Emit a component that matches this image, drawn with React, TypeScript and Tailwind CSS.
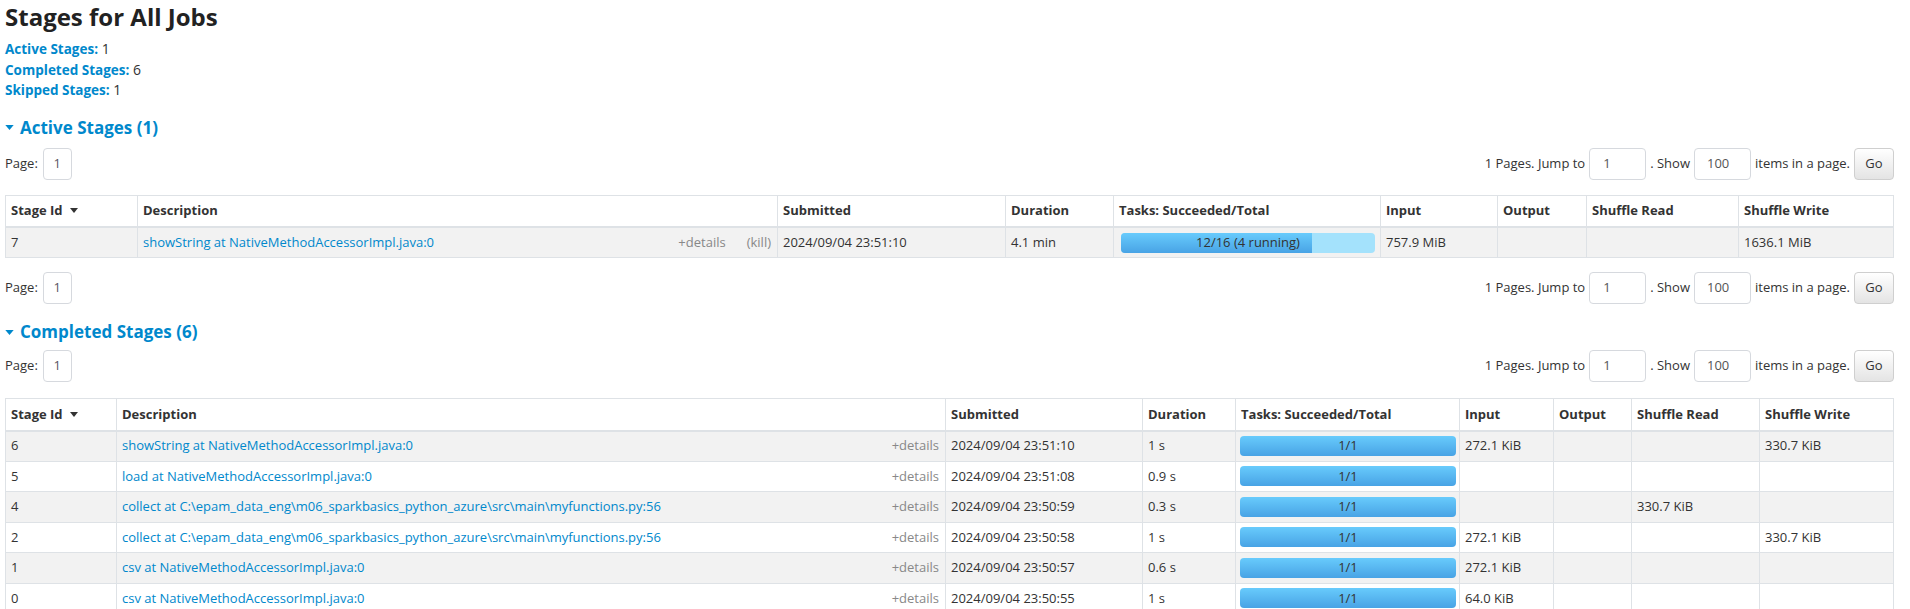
type Stage = {
  id: string;
  desc: string;
  submitted: string;
  duration: string;
  done: number;
  total: number;
  running?: number;
  input?: string;
  output?: string;
  shuffleRead?: string;
  shuffleWrite?: string;
  kill?: boolean;
};

const collectDesc = 'collect at C:\\epam_data_eng\\m06_sparkbasics_python_azure\\src\\main\\myfunctions.py:56';

const activeStages: Stage[] = [
  { id: '7', desc: 'showString at NativeMethodAccessorImpl.java:0', submitted: '2024/09/04 23:51:10', duration: '4.1 min', done: 12, total: 16, running: 4, input: '757.9 MiB', shuffleWrite: '1636.1 MiB', kill: true },
];

const completedStages: Stage[] = [
  { id: '6', desc: 'showString at NativeMethodAccessorImpl.java:0', submitted: '2024/09/04 23:51:10', duration: '1 s', done: 1, total: 1, input: '272.1 KiB', shuffleWrite: '330.7 KiB' },
  { id: '5', desc: 'load at NativeMethodAccessorImpl.java:0', submitted: '2024/09/04 23:51:08', duration: '0.9 s', done: 1, total: 1 },
  { id: '4', desc: collectDesc, submitted: '2024/09/04 23:50:59', duration: '0.3 s', done: 1, total: 1, shuffleRead: '330.7 KiB' },
  { id: '2', desc: collectDesc, submitted: '2024/09/04 23:50:58', duration: '1 s', done: 1, total: 1, input: '272.1 KiB', shuffleWrite: '330.7 KiB' },
  { id: '1', desc: 'csv at NativeMethodAccessorImpl.java:0', submitted: '2024/09/04 23:50:57', duration: '0.6 s', done: 1, total: 1, input: '272.1 KiB' },
  { id: '0', desc: 'csv at NativeMethodAccessorImpl.java:0', submitted: '2024/09/04 23:50:55', duration: '1 s', done: 1, total: 1, input: '64.0 KiB' },
];

const headers = ['Stage Id', 'Description', 'Submitted', 'Duration', 'Tasks: Succeeded/Total', 'Input', 'Output', 'Shuffle Read', 'Shuffle Write'];

const activeCols = ['w-[132px]', 'w-[640px]', 'w-[228px]', 'w-[108px]', 'w-[267px]', 'w-[117px]', 'w-[89px]', 'w-[152px]', ''];
const completedCols = ['w-[111px]', 'w-[829px]', 'w-[197px]', 'w-[93px]', 'w-[224px]', 'w-[94px]', 'w-[78px]', 'w-[128px]', ''];

function Caret({ className }: { className: string }) {
  return (
    <svg viewBox="0 0 10 6" className={className}>
      <polygon points="0,0 10,0 5,6" fill="currentColor" />
    </svg>
  );
}

function Progress({ done, total, running }: { done: number; total: number; running?: number }) {
  const pct = (done / total) * 100;
  const label = running ? `${done}/${total} (${running} running)` : `${done}/${total}`;
  return (
    <div className="relative h-[20px] w-full overflow-hidden rounded-[4px] bg-[#a4e2fc]">
      <div className="h-full bg-gradient-to-b from-[#68cbfc] to-[#48a3e5]" style={{ width: `${pct}%` }} />
      <span className="absolute inset-0 flex items-center justify-center text-[#333]">{label}</span>
    </div>
  );
}

function Pager() {
  return (
    <div className="flex h-[32px] items-center justify-between">
      <div className="flex items-center gap-[5px]">
        <span>Page:</span>
        <span className="flex h-[32px] w-[29px] items-center justify-center rounded-[4px] border border-[#d6d9de] text-[#5a5564]">1</span>
      </div>
      <div className="flex items-center gap-[4px]">
        <span>1 Pages. Jump to</span>
        <span className="flex h-[32px] w-[57px] items-center rounded-[4px] border border-[#d6d9de] pl-[13px] text-[#555]">1</span>
        <span>. Show</span>
        <span className="flex h-[32px] w-[57px] items-center rounded-[4px] border border-[#d6d9de] pl-[12px] text-[#555]">100</span>
        <span>items in a page.</span>
        <button className="h-[32px] w-[40px] rounded-[4px] border border-[#cfcfcf] bg-gradient-to-b from-white to-[#e4e4e4] text-[#333]">Go</button>
      </div>
    </div>
  );
}

function StageTable({ rows, cols, barPad }: { rows: Stage[]; cols: string[]; barPad: string }) {
  return (
    <table className="w-full table-fixed border-collapse border border-[#dee2e6]">
      <colgroup>
        {cols.map((c, i) => (
          <col key={i} className={c} />
        ))}
      </colgroup>
      <thead>
        <tr>
          {headers.map((h, i) => (
            <th key={h} className="h-[32px] border border-b-2 border-[#dee2e6] px-[5px] text-left font-bold text-[#333]">
              {i === 0 ? (
                <span className="flex items-center gap-[7px]">
                  {h}
                  <Caret className="h-[5px] w-[8px] text-[#333]" />
                </span>
              ) : (
                h
              )}
            </th>
          ))}
        </tr>
      </thead>
      <tbody>
        {rows.map((r, i) => (
          <tr key={r.id} className={i % 2 === 0 ? 'bg-[#f2f2f2]' : 'bg-white'}>
            <td className="h-[30.5px] border border-[#dee2e6] px-[5px]">{r.id}</td>
            <td className="border border-[#dee2e6] px-[5px]">
              <div className="flex items-center justify-between">
                <span className="truncate text-[#0088cc]">{r.desc}</span>
                <span className="flex gap-[21px] pr-[1px] text-[#888]">
                  <span>+details</span>
                  {r.kill && <span>(kill)</span>}
                </span>
              </div>
            </td>
            <td className="border border-[#dee2e6] px-[5px]">{r.submitted}</td>
            <td className="border border-[#dee2e6] px-[5px]">{r.duration}</td>
            <td className={`border border-[#dee2e6] ${barPad}`}>
              <Progress done={r.done} total={r.total} running={r.running} />
            </td>
            <td className="border border-[#dee2e6] px-[5px]">{r.input ?? ''}</td>
            <td className="border border-[#dee2e6] px-[5px]">{r.output ?? ''}</td>
            <td className="border border-[#dee2e6] px-[5px]">{r.shuffleRead ?? ''}</td>
            <td className="border border-[#dee2e6] px-[5px]">{r.shuffleWrite ?? ''}</td>
          </tr>
        ))}
      </tbody>
    </table>
  );
}

function SectionTitle({ children }: { children: string }) {
  return (
    <h4 className="flex h-[28px] items-center gap-[6px] text-[17px] font-bold text-[#0088cc]">
      <Caret className="h-[5px] w-[9px]" />
      {children}
    </h4>
  );
}

export default function App() {
  return (
    <div className="min-h-screen bg-white pl-[5px] pr-[16px] font-['Open_Sans',sans-serif] text-[13px] text-[#333]">
      <h3 className="h-[36px] text-[24px] leading-[34px] font-bold text-[#222]">Stages for All Jobs</h3>
      <ul className="mt-[3px] text-[14px]">
        {[
          ['Active Stages:', '1'],
          ['Completed Stages:', '6'],
          ['Skipped Stages:', '1'],
        ].map(([k, v]) => (
          <li key={k} className="h-[20.5px] leading-[20.5px]">
            <span className="text-[13.5px] font-bold text-[#0088cc]">{k}</span> {v}
          </li>
        ))}
      </ul>

      <div className="mt-[13px]">
        <SectionTitle>Active Stages (1)</SectionTitle>
      </div>
      <div className="mt-[6px]">
        <Pager />
      </div>
      <div className="mt-[15px]">
        <StageTable rows={activeStages} cols={activeCols} barPad="pl-[7px] pr-[5px]" />
      </div>
      <div className="mt-[14px]">
        <Pager />
      </div>

      <div className="mt-[14px]">
        <SectionTitle>Completed Stages (6)</SectionTitle>
      </div>
      <div className="mt-[4px]">
        <Pager />
      </div>
      <div className="mt-[16px]">
        <StageTable rows={completedStages} cols={completedCols} barPad="pl-[4px] pr-[3px]" />
      </div>
    </div>
  );
}
